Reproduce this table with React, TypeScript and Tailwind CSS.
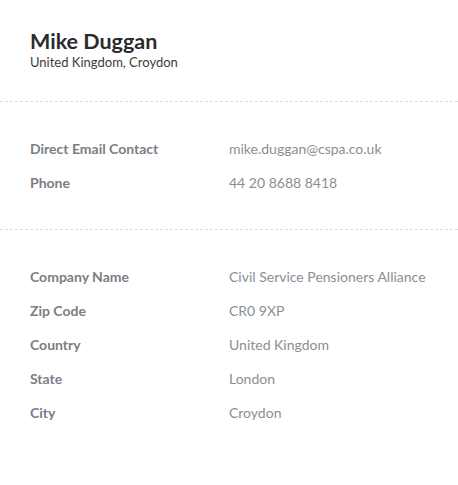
const contactRows = [
  { label: 'Direct Email Contact', value: 'mike.duggan@cspa.co.uk' },
  { label: 'Phone', value: '44 20 8688 8418' },
];

const companyRows = [
  { label: 'Company Name', value: 'Civil Service Pensioners Alliance' },
  { label: 'Zip Code', value: 'CR0 9XP' },
  { label: 'Country', value: 'United Kingdom' },
  { label: 'State', value: 'London' },
  { label: 'City', value: 'Croydon' },
];

function InfoRow({ label, value }: { label: string; value: string }) {
  return (
    <div className="flex h-[34px] items-center">
      <span className="w-[199px] shrink-0 text-[14px] font-bold text-[#7b7e83]">{label}</span>
      <span className="text-[14px] text-[#8b8e92]">{value}</span>
    </div>
  );
}

export default function App() {
  return (
    <div
      className="h-[485px] w-[458px] bg-white"
      style={{ fontFamily: 'Lato, "Open Sans", sans-serif' }}
    >
      {/* Header */}
      <div className="px-[30px] pt-[28px] pb-[32px]">
        <h1 className="text-[21.5px] font-bold leading-[27px] text-[#2b2b2d]">Mike Duggan</h1>
        <p className="text-[13px] leading-[14px] text-[#3c3d40]">United Kingdom, Croydon</p>
      </div>

      <div className="border-t border-dashed border-[#dcdde0]" />

      {/* Contact */}
      <div className="px-[30px] pt-[29px] pb-[30px]">
        {contactRows.map((r) => (
          <InfoRow key={r.label} {...r} />
        ))}
      </div>

      <div className="border-t border-dashed border-[#dcdde0]" />

      {/* Company */}
      <div className="px-[30px] pt-[29px]">
        {companyRows.map((r) => (
          <InfoRow key={r.label} {...r} />
        ))}
      </div>
    </div>
  );
}
